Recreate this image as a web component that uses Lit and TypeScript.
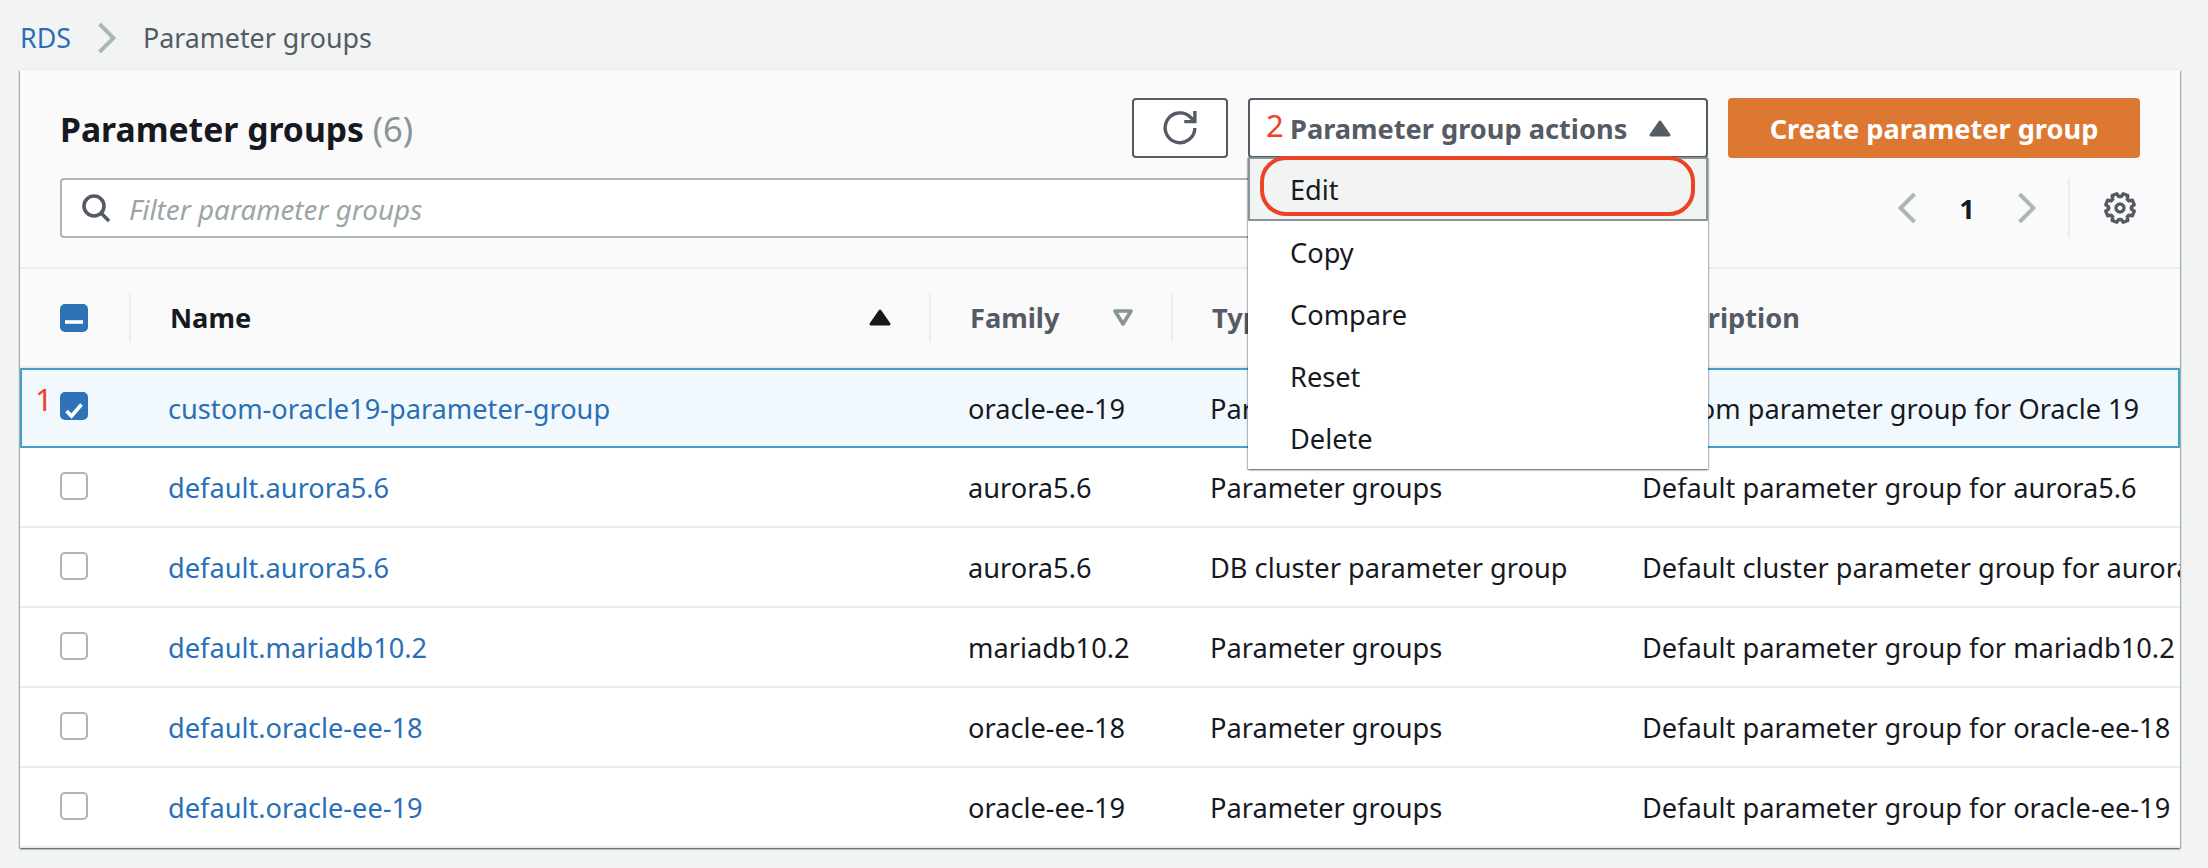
import { LitElement, css, html, svg } from 'lit';
import { customElement } from 'lit/decorators.js';

type Row = { name: string; family: string; type: string; desc: string; selected?: boolean };

const ROWS: Row[] = [
  { name: 'custom-oracle19-parameter-group', family: 'oracle-ee-19', type: 'Parameter groups', desc: 'Custom parameter group for Oracle 19', selected: true },
  { name: 'default.aurora5.6', family: 'aurora5.6', type: 'Parameter groups', desc: 'Default parameter group for aurora5.6' },
  { name: 'default.aurora5.6', family: 'aurora5.6', type: 'DB cluster parameter group', desc: 'Default cluster parameter group for aurora5.6' },
  { name: 'default.mariadb10.2', family: 'mariadb10.2', type: 'Parameter groups', desc: 'Default parameter group for mariadb10.2' },
  { name: 'default.oracle-ee-18', family: 'oracle-ee-18', type: 'Parameter groups', desc: 'Default parameter group for oracle-ee-18' },
  { name: 'default.oracle-ee-19', family: 'oracle-ee-19', type: 'Parameter groups', desc: 'Default parameter group for oracle-ee-19' },
];

const MENU = ['Edit', 'Copy', 'Compare', 'Reset', 'Delete'];

// 8 tooth gear outline, centred on 16,16 in a 32 box
function gearPath() {
  const pts: string[] = [];
  for (let i = 0; i < 8; i++) {
    const a = (i * Math.PI) / 4 + Math.PI / 8;
    for (const [r, d] of [[11.4, -0.3], [14.6, -0.17], [14.6, 0.17], [11.4, 0.3]]) {
      pts.push(`${(16 + r * Math.cos(a + d)).toFixed(2)},${(16 + r * Math.sin(a + d)).toFixed(2)}`);
    }
  }
  return `M${pts.join('L')}Z`;
}

const chevron = (left: boolean) => svg`
  <svg width="18" height="30" viewBox="0 0 18 30" fill="none" stroke="#aab7b8" stroke-width="4">
    <polyline points=${left ? '16.5,1 2.5,15 16.5,29' : '1.5,1 15.5,15 1.5,29'}></polyline>
  </svg>`;

const triangleUp = (color: string) => svg`
  <svg width="22" height="17" viewBox="0 0 22 17">
    <polygon points="11,2 20,15 2,15" fill=${color} stroke=${color} stroke-width="3" stroke-linejoin="round"></polygon>
  </svg>`;

@customElement('app-root')
export class AppRoot extends LitElement {
  static styles = css`
    :host {
      background: #f2f3f3;
      color: #16191f;
      display: block;
      font-family: 'Noto Sans', sans-serif;
      font-size: 27.2px;
      height: 868px;
      overflow: hidden;
      width: 2208px;
    }

    .crumbs {
      align-items: center;
      color: #545b64;
      display: flex;
      font-size: 26.8px;
      gap: 27px;
      height: 70px;
      padding: 5px 0 0 20px;
      box-sizing: border-box;
    }

    .crumbs a {
      color: #2a6fb5;
    }

    .panel {
      background: #fafafa;
      box-shadow: 0 1px 2px 0 rgba(0, 28, 36, 0.5), 1px 1px 1px 0 rgba(0, 28, 36, 0.2), -1px 1px 1px 0 rgba(0, 28, 36, 0.2);
      box-sizing: border-box;
      height: 778px;
      margin: 0 28px 0 20px;
      overflow: hidden;
      padding-top: 28px;
      position: relative;
    }

    .top {
      align-items: center;
      display: flex;
      gap: 20px;
      height: 60px;
      padding: 0 40px;
    }

    h1 {
      flex: 1;
      font-size: 33.7px;
      font-weight: 700;
      margin: 0;
    }

    h1 span {
      color: #879596;
      font-size: 34.5px;
      font-weight: 400;
    }

    button {
      align-items: center;
      border-radius: 4px;
      box-sizing: border-box;
      display: flex;
      font-family: inherit;
      font-size: 27.2px;
      font-weight: 700;
      height: 60px;
      padding: 0;
    }

    .refresh {
      background: #fff;
      border: 2px solid #545b64;
      justify-content: center;
      width: 96px;
    }

    .actions-wrap {
      position: relative;
      width: 460px;
    }

    .actions {
      background: #fff;
      border: 2px solid #545b64;
      color: #545b64;
      justify-content: space-between;
      padding: 0 35px 0 40px;
      width: 100%;
    }

    .create {
      background: #dd7832;
      border: 2px solid #dd7832;
      color: #fff;
      justify-content: center;
      width: 412px;
    }

    .menu {
      background: #fff;
      box-shadow: 0 1px 2px 0 rgba(0, 28, 36, 0.5), 1px 1px 1px 0 rgba(0, 28, 36, 0.15), -1px 1px 1px 0 rgba(0, 28, 36, 0.15);
      left: 0;
      position: absolute;
      right: 0;
      top: 59px;
      z-index: 3;
    }

    .item {
      align-items: center;
      box-sizing: border-box;
      display: flex;
      height: 62px;
      padding-left: 42px;
    }

    .item.active {
      background: #f2f3f3;
      border: 2px solid #879596;
      height: 64px;
      padding-left: 40px;
    }

    .mark {
      color: #ea4325;
      font-size: 31px;
      font-weight: 400;
      line-height: 1;
      position: absolute;
    }

    .mark.two {
      left: 18px;
      top: 12px;
    }

    .mark.one {
      left: 15px;
      top: 314px;
      z-index: 2;
    }

    .oval {
      border: 4px solid #ea4325;
      border-radius: 26px;
      box-sizing: border-box;
      height: 60px;
      left: 12px;
      position: absolute;
      right: 13px;
      top: 58px;
      z-index: 4;
    }

    .tools {
      align-items: center;
      display: flex;
      height: 60px;
      margin-top: 20px;
      padding: 0 44px 0 40px;
    }

    .search {
      align-items: center;
      background: #fff;
      border: 2px solid #aab7b8;
      border-radius: 4px;
      box-sizing: border-box;
      color: #9aa6a8;
      display: flex;
      font-size: 27.8px;
      font-style: italic;
      gap: 17px;
      height: 60px;
      padding: 2px 0 0 18px;
      width: 1300px;
    }

    .pager {
      align-items: center;
      display: flex;
      font-weight: 700;
      height: 60px;
      margin-left: auto;
    }

    .page {
      text-align: center;
      width: 102px;
    }

    .sep {
      background: #eaeded;
      height: 60px;
      margin: 0 34px 0 32px;
      width: 2px;
    }

    .row {
      display: grid;
      grid-template-columns: 109px 800px 242px 432px 1fr;
      white-space: nowrap;
    }

    .head {
      align-items: center;
      border-top: 2px solid #eaeded;
      border-bottom: 2px solid #eaeded;
      box-sizing: border-box;
      color: #545b64;
      font-weight: 700;
      height: 101px;
      margin-top: 29px;
    }

    .th {
      align-items: center;
      border-left: 2px solid #eaeded;
      box-sizing: border-box;
      display: flex;
      height: 48px;
      justify-content: space-between;
      padding: 0 38px 0 39px;
    }

    .th.sorted {
      color: #16191f;
    }

    .body {
      align-items: center;
      background: #fff;
      border-bottom: 2px solid #eaeded;
      box-sizing: border-box;
      height: 80px;
    }

    .body:last-child {
      border-bottom: none;
    }

    .body.selected {
      background: #f2f9fe;
      border-bottom: none;
      box-shadow: inset 0 0 0 2px #44a0c8;
    }

    .td {
      padding-left: 39px;
    }

    .check {
      padding-left: 40px;
    }

    .body .check {
      padding-bottom: 2px;
    }

    .body.selected .check {
      padding-bottom: 4px;
    }

    .box {
      background: #fff;
      border: 2px solid #aab7b8;
      border-radius: 5px;
      box-sizing: border-box;
      display: block;
      height: 28px;
      width: 28px;
    }

    .box.on {
      background: #2e73b8;
      border-color: #2e73b8;
    }

    .body a {
      color: #2a6fb5;
    }
  `;

  private box(on: boolean, minus = false) {
    return html`<span class="box ${on ? 'on' : ''}">
      ${on
        ? svg`<svg width="24" height="24" viewBox="0 0 24 24" fill="none" stroke="#fff" stroke-width="3.6">
            ${minus ? svg`<path d="M3 11h18"></path>` : svg`<path d="M4.5 12l5 5 10-11.5"></path>`}
          </svg>`
        : ''}
    </span>`;
  }

  render() {
    return html`
      <nav class="crumbs">
        <a>RDS</a>
        ${chevron(false)}
        <span>Parameter groups</span>
      </nav>
      <section class="panel">
        <div class="top">
          <h1>Parameter groups <span>(6)</span></h1>
          <button class="refresh">
            <svg width="34" height="34" viewBox="0 0 16 16" fill="none" stroke="#545b64" stroke-width="1.6">
              <path d="M10 5h5V0"></path>
              <path d="M15 8a6.99 6.99 0 1 1-2-5l2 2"></path>
            </svg>
          </button>
          <div class="actions-wrap">
            <button class="actions">
              <span>Parameter group actions</span>
              ${triangleUp('#545b64')}
            </button>
            <span class="mark two">2</span>
            <div class="menu">
              ${MENU.map((m, i) => html`<div class="item ${i === 0 ? 'active' : ''}">${m}</div>`)}
            </div>
            <div class="oval"></div>
          </div>
          <button class="create">Create parameter group</button>
        </div>
        <div class="tools">
          <div class="search">
            <svg width="32" height="32" viewBox="0 0 32 32" fill="none" stroke="#545b64" stroke-width="3.6">
              <circle cx="14" cy="13" r="10"></circle>
              <path d="M21 20l8 8"></path>
            </svg>
            <span>Filter parameter groups</span>
          </div>
          <div class="pager">
            ${chevron(true)}
            <span class="page">1</span>
            ${chevron(false)}
            <span class="sep"></span>
            <svg width="32" height="32" viewBox="0 0 32 32" fill="none" stroke="#545b64" stroke-width="3.4" stroke-linejoin="round">
              <path d=${gearPath()}></path>
              <circle cx="16" cy="16" r="4"></circle>
            </svg>
          </div>
        </div>
        <div class="row head">
          <div class="check">${this.box(true, true)}</div>
          <div class="th sorted">Name ${triangleUp('#16191f')}</div>
          <div class="th">
            Family
            <svg width="20" height="17" viewBox="0 0 20 17" fill="none" stroke="#879596" stroke-width="3.6" stroke-linejoin="round">
              <polygon points="2,2 18,2 10,15"></polygon>
            </svg>
          </div>
          <div class="th">Type</div>
          <div class="th">Description</div>
        </div>
        ${ROWS.map(
          (r) => html`
            <div class="row body ${r.selected ? 'selected' : ''}">
              <div class="check">${this.box(!!r.selected)}</div>
              <div class="td"><a>${r.name}</a></div>
              <div class="td">${r.family}</div>
              <div class="td">${r.type}</div>
              <div class="td">${r.desc}</div>
            </div>
          `,
        )}
        <span class="mark one">1</span>
      </section>
    `;
  }
}
